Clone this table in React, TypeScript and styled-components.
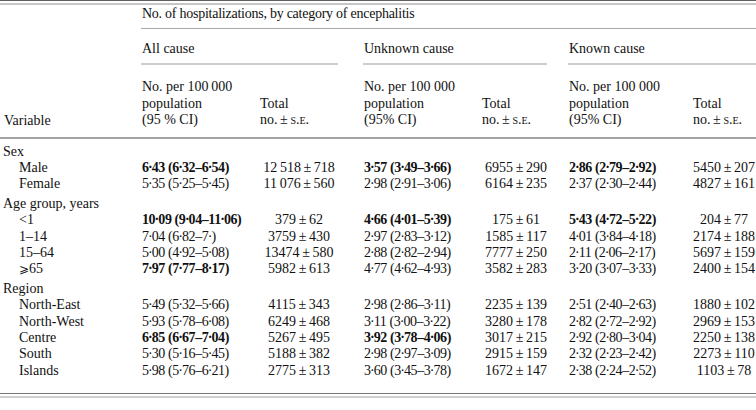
import styled, { createGlobalStyle } from "styled-components";

const GlobalStyle = createGlobalStyle`
  html, body {
    margin: 0;
    padding: 0;
    background: #fff;
  }
  body {
    font-family: "Liberation Serif", "DejaVu Serif", serif;
    color: #111;
  }
`;

const COLUMNS = "141px 118px 104px 118px 87px 124px 64px";
const TS = "\u2009";

type Total = [string, string];

type Row = {
  label: string;
  ci: [string, string, string];
  totals: [Total, Total, Total];
  bold?: [boolean, boolean, boolean];
};

type Section = { title: string; rows: Row[] };

const sections: Section[] = [
  {
    title: "Sex",
    rows: [
      {
        label: "Male",
        ci: ["6·43 (6·32–6·54)", "3·57 (3·49–3·66)", "2·86 (2·79–2·92)"],
        totals: [[`12${TS}518`, "718"], ["6955", "290"], ["5450", "207"]],
        bold: [true, true, true],
      },
      {
        label: "Female",
        ci: ["5·35 (5·25–5·45)", "2·98 (2·91–3·06)", "2·37 (2·30–2·44)"],
        totals: [[`11${TS}076`, "560"], ["6164", "235"], ["4827", "161"]],
      },
    ],
  },
  {
    title: "Age group, years",
    rows: [
      {
        label: "<1",
        ci: ["10·09 (9·04–11·06)", "4·66 (4·01–5·39)", "5·43 (4·72–5·22)"],
        totals: [["379", "62"], ["175", "61"], ["204", "77"]],
        bold: [true, true, true],
      },
      {
        label: "1–14",
        ci: ["7·04 (6·82–7·)", "2·97 (2·83–3·12)", "4·01 (3·84–4·18)"],
        totals: [["3759", "430"], ["1585", "117"], ["2174", "188"]],
      },
      {
        label: "15–64",
        ci: ["5·00 (4·92–5·08)", "2·88 (2·82–2·94)", "2·11 (2·06–2·17)"],
        totals: [["13474", "580"], ["7777", "250"], ["5697", "159"]],
      },
      {
        label: "⩾65",
        ci: ["7·97 (7·77–8·17)", "4·77 (4·62–4·93)", "3·20 (3·07–3·33)"],
        totals: [["5982", "613"], ["3582", "283"], ["2400", "154"]],
        bold: [true, false, false],
      },
    ],
  },
  {
    title: "Region",
    rows: [
      {
        label: "North-East",
        ci: ["5·49 (5·32–5·66)", "2·98 (2·86–3·11)", "2·51 (2·40–2·63)"],
        totals: [["4115", "343"], ["2235", "139"], ["1880", "102"]],
      },
      {
        label: "North-West",
        ci: ["5·93 (5·78–6·08)", "3·11 (3·00–3·22)", "2·82 (2·72–2·92)"],
        totals: [["6249", "468"], ["3280", "178"], ["2969", "153"]],
      },
      {
        label: "Centre",
        ci: ["6·85 (6·67–7·04)", "3·92 (3·78–4·06)", "2·92 (2·80–3·04)"],
        totals: [["5267", "495"], ["3017", "215"], ["2250", "138"]],
        bold: [true, true, false],
      },
      {
        label: "South",
        ci: ["5·30 (5·16–5·45)", "2·98 (2·97–3·09)", "2·32 (2·23–2·42)"],
        totals: [["5188", "382"], ["2915", "159"], ["2273", "110"]],
      },
      {
        label: "Islands",
        ci: ["5·98 (5·76–6·21)", "3·60 (3·45–3·78)", "2·38 (2·24–2·52)"],
        totals: [["2775", "313"], ["1672", "147"], ["1103", "78"]],
      },
    ],
  },
];

const groups = [
  { title: "All cause", gap: 25, pct: "95 % CI", per: `100${TS}000` },
  { title: "Unknown cause", gap: 21, pct: "95% CI", per: "100 000" },
  { title: "Known cause", gap: 0, pct: "95% CI", per: "100 000" },
];

// centre of each "Total" column is pulled left by this much
const totalPad = [24, 17, 0];

const Page = styled.div`
  width: 756px;
  height: 410px;
  overflow: hidden;
  font-size: 14px;
  line-height: 16.5px;
`;

const Rule = styled.div<{ $size: number; $color: string; $gap?: number }>`
  height: ${(p) => p.$size}px;
  background: ${(p) => p.$color};
  margin-top: ${(p) => p.$gap ?? 0}px;
`;

const HeaderGrid = styled.div`
  display: grid;
  grid-template-columns: ${COLUMNS};
  grid-template-rows: auto auto auto;
`;

const VariableHead = styled.div`
  grid-column: 1;
  grid-row: 1 / 4;
  align-self: end;
  padding: 0 0 7px 4px;
`;

const SpanTitle = styled.div`
  grid-column: 2 / 8;
  padding: 1px 0 5px 1px;
  letter-spacing: -0.25px;
  border-bottom: 1px solid #a9a9a9;
`;

const GroupTitle = styled.div<{ $gap: number }>`
  grid-column: span 2;
  margin-right: ${(p) => p.$gap}px;
  padding: 12px 0 6px 1px;
  border-bottom: 2px solid #cdcdcd;
`;

const SubHead = styled.div`
  align-self: end;
  padding: 14px 0 8px 1px;
  white-space: nowrap;
`;

const SmallCaps = styled.span`
  font-variant: small-caps;
`;

const BodyGrid = styled.div`
  display: grid;
  grid-template-columns: ${COLUMNS};
  line-height: 16.4px;
  padding: 5px 0 14px;
`;

const SectionTitle = styled.div<{ $first: boolean }>`
  grid-column: 1 / -1;
  padding-left: 3px;
  margin-top: ${(p) => (p.$first ? 0 : 3)}px;
`;

const Label = styled.div`
  padding-left: 19px;
  white-space: nowrap;
`;

const CiCell = styled.div<{ $bold?: boolean }>`
  padding-left: 1px;
  letter-spacing: -0.4px;
  font-weight: ${(p) => (p.$bold ? 700 : 400)};
  white-space: nowrap;
`;

const TotalCell = styled.div<{ $pad: number }>`
  text-align: center;
  padding-right: ${(p) => p.$pad}px;
  white-space: nowrap;
`;

const PlusMinus = styled.span`
  margin: 0 2.6px;
`;

// the decimal point of the source is set tight
const Dot = styled.span`
  margin: 0 -0.6px;
`;

const Geq = styled.span`
  font-family: "DejaVu Serif", "Liberation Serif", serif;
  font-size: 12px;
`;

function withDots(text: string) {
  const parts = text.split("·");
  return parts.flatMap((part, i) => (i === 0 ? [part] : [<Dot key={i}>·</Dot>, part]));
}

function renderLabel(label: string) {
  if (label.startsWith("⩾")) {
    return (
      <>
        <Geq>⩾</Geq>
        {label.slice(1)}
      </>
    );
  }
  return label;
}

export default function App() {
  return (
    <Page>
      <GlobalStyle />
      <Rule $size={1} $color="#5f5f5f" />
      <Rule $size={2} $color="#c6c6c6" $gap={2} />

      <HeaderGrid>
        <VariableHead>Variable</VariableHead>
        <SpanTitle>No. of hospitalizations, by category of encephalitis</SpanTitle>
        {groups.map((g) => (
          <GroupTitle key={g.title} $gap={g.gap}>
            {g.title}
          </GroupTitle>
        ))}
        {groups.map((g) => [
          <SubHead key={g.title + "-ci"}>
            No. per {g.per}
            <br />
            population
            <br />({g.pct})
          </SubHead>,
          <SubHead key={g.title + "-tot"}>
            Total
            <br />
            no.<PlusMinus>±</PlusMinus>
            <SmallCaps>s.e.</SmallCaps>
          </SubHead>,
        ])}
      </HeaderGrid>

      <Rule $size={2} $color="#a3a3a3" />

      <BodyGrid>
        {sections.map((s, si) => [
          <SectionTitle key={s.title} $first={si === 0}>
            {s.title}
          </SectionTitle>,
          ...s.rows.map((r) => [
            <Label key={r.label}>{renderLabel(r.label)}</Label>,
            ...r.ci.flatMap((ci, gi) => [
              <CiCell key={r.label + "ci" + gi} $bold={r.bold?.[gi]}>
                {withDots(ci)}
              </CiCell>,
              <TotalCell key={r.label + "tot" + gi} $pad={totalPad[gi]}>
                {r.totals[gi][0]}
                <PlusMinus>±</PlusMinus>
                {r.totals[gi][1]}
              </TotalCell>,
            ]),
          ]),
        ])}
      </BodyGrid>

      <Rule $size={1} $color="#7a7a7a" />
      <Rule $size={2} $color="#cfcfcf" $gap={2} />
    </Page>
  );
}
